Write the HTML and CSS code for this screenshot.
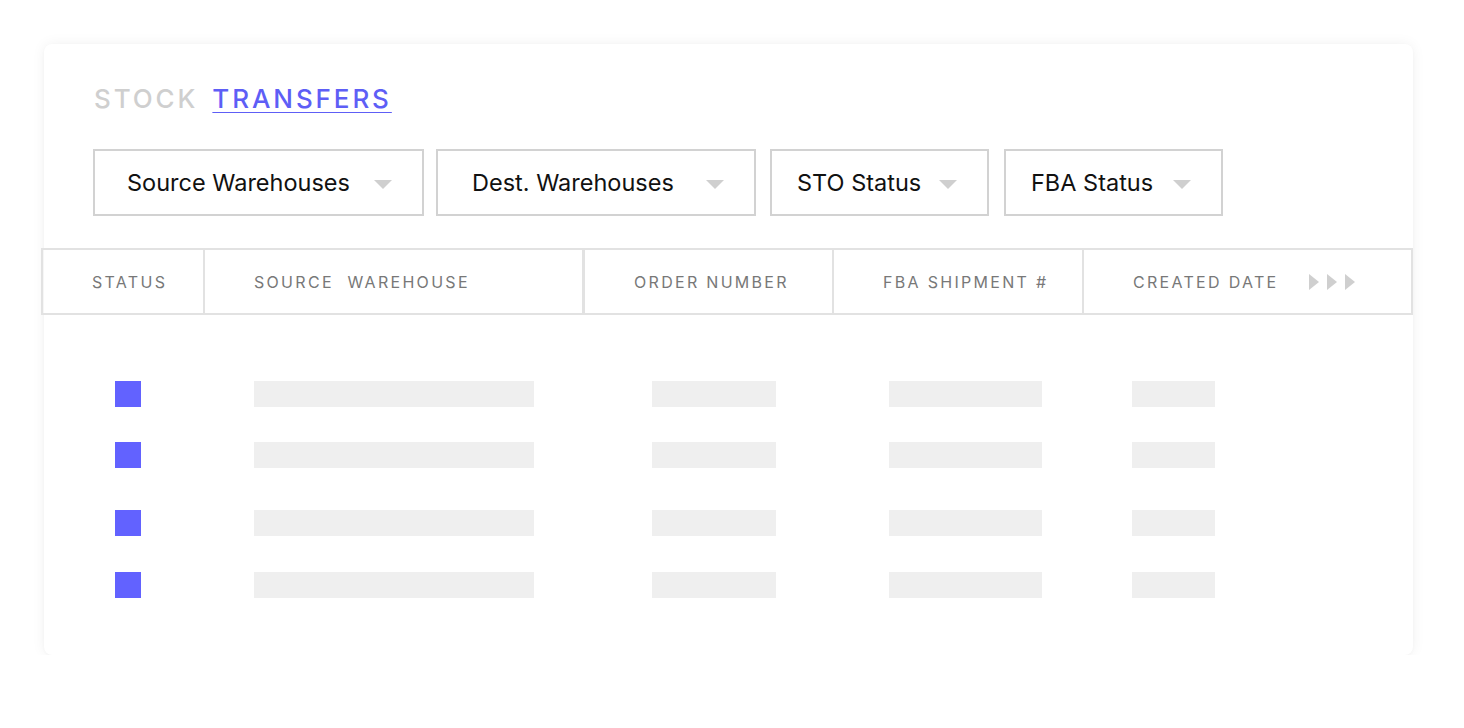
FILE: index.html
```html
<!DOCTYPE html>
<html>
<head>
<meta charset="utf-8">
<link rel="stylesheet" href="styles.css">
</head>
<body>
<div class="card">
  <div class="title"><span class="muted">STOCK</span><span class="active">TRANSFERS</span></div>
  <div class="filters">
    <div class="filter f1"><span>Source Warehouses</span><i class="caret"></i></div>
    <div class="filter f2"><span>Dest. Warehouses</span><i class="caret"></i></div>
    <div class="filter f3"><span>STO Status</span><i class="caret"></i></div>
    <div class="filter f4"><span>FBA Status</span><i class="caret"></i></div>
  </div>
  <div class="thead">
    <div class="th c1">STATUS</div>
    <div class="th c2">SOURCE&nbsp; WAREHOUSE</div>
    <div class="th c3">ORDER NUMBER</div>
    <div class="th c4">FBA SHIPMENT #</div>
    <div class="th c5"><span>CREATED DATE</span><svg class="more" width="48" height="18" viewBox="0 0 48 18"><path d="M0 1 L10 9 L0 17Z M18 1 L28 9 L18 17Z M36 1 L46 9 L36 17Z" fill="#cfcfcf"/></svg></div>
  </div>
  <div class="rows">
    <div class="row"><i class="sq"></i><i class="bar b1"></i><i class="bar b2"></i><i class="bar b3"></i><i class="bar b4"></i></div>
    <div class="row"><i class="sq"></i><i class="bar b1"></i><i class="bar b2"></i><i class="bar b3"></i><i class="bar b4"></i></div>
    <div class="row r3"><i class="sq"></i><i class="bar b1"></i><i class="bar b2"></i><i class="bar b3"></i><i class="bar b4"></i></div>
    <div class="row r4"><i class="sq"></i><i class="bar b1"></i><i class="bar b2"></i><i class="bar b3"></i><i class="bar b4"></i></div>
  </div>
</div>
</body>
</html>
```
FILE: styles.css
```css
* { box-sizing: border-box; }
html, body { margin: 0; background: #fff; }
body { padding: 44px 0 0 44px; font-family: Inter, "Liberation Sans", sans-serif; }
.card {
  width: 1369px; height: 611px; background: #fff; border-radius: 8px;
  box-shadow: 0 0 14px rgba(0,0,0,0.06), 0 1px 3px rgba(0,0,0,0.03);
  padding: 40px 0 0 0;
}
.title { padding-left: 50px; font-size: 26px; letter-spacing: 2.9px; font-weight: 500; line-height: 30px; height: 30px; white-space: nowrap; }
.title .muted { color: #cfcfcf; margin-right: 14px; }
.title .active { color: #5e5ef6; text-decoration: underline; text-underline-offset: 4px; text-decoration-thickness: 1px; }
.filters { display: flex; padding-left: 49px; margin-top: 35px; height: 67px; }
.filter {
  border: 2px solid #d2d2d2; height: 67px; display: flex; align-items: center;
  padding-left: 32px; font-size: 23.5px; color: #111; white-space: nowrap;
}
.f1 { width: 331px; }
.f2 { width: 320px; margin-left: 12px; padding-left: 34px; }
.f3 { width: 219px; margin-left: 14px; padding-left: 25px; }
.f4 { width: 219px; margin-left: 15px; padding-left: 25px; }
.caret { border-left: 9px solid transparent; border-right: 9px solid transparent; border-top: 9px solid #cfcfcf; margin-left: auto; margin-right: 30px; margin-top: 4px; }
.thead { display: flex; margin: 32px 0 0 -3px; width: 1372px; height: 67px; border: 2px solid #e2e2e2; }
.th { display: flex; align-items: center; padding-left: 49px; font-size: 16px; letter-spacing: 2.3px; color: #787878; border-left: 2px solid #e2e2e2; white-space: nowrap; }
.th.c1 { border-left: 0; width: 160px; }
.c2 { width: 379px; }
.c3 { width: 250px; border-left-width: 3px; }
.c4 { width: 250px; }
.c5 { flex: 1; }
.more { margin-left: 30px; }
.rows { padding-top: 66px; display: flex; flex-direction: column; gap: 35px; }
.row { display: flex; height: 26px; align-items: center; }
.row.r3 { margin-top: 7px; }
.row.r4 { margin-top: 1px; }
.sq { width: 26px; height: 26px; background: #6262ff; margin-left: 71px; }
.bar { height: 26px; background: #efefef; }
.b1 { width: 280px; margin-left: 113px; }
.b2 { width: 124px; margin-left: 118px; }
.b3 { width: 153px; margin-left: 113px; }
.b4 { width: 83px; margin-left: 90px; }
```
